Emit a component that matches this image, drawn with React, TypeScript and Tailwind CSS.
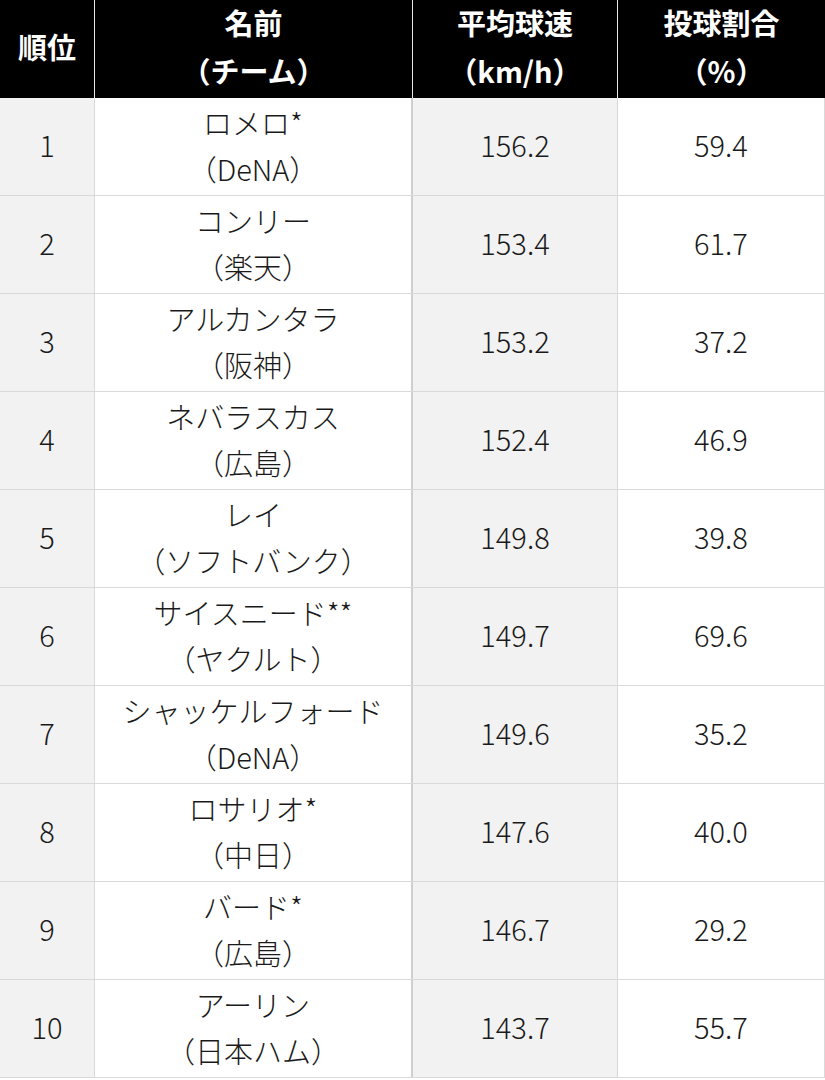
import React from "react";

const rows = [
  { rank: "1", name: "ロメロ*", team: "（DeNA）", speed: "156.2", pct: "59.4" },
  { rank: "2", name: "コンリー", team: "（楽天）", speed: "153.4", pct: "61.7" },
  { rank: "3", name: "アルカンタラ", team: "（阪神）", speed: "153.2", pct: "37.2" },
  { rank: "4", name: "ネバラスカス", team: "（広島）", speed: "152.4", pct: "46.9" },
  { rank: "5", name: "レイ", team: "（ソフトバンク）", speed: "149.8", pct: "39.8" },
  { rank: "6", name: "サイスニード**", team: "（ヤクルト）", speed: "149.7", pct: "69.6" },
  { rank: "7", name: "シャッケルフォード", team: "（DeNA）", speed: "149.6", pct: "35.2" },
  { rank: "8", name: "ロサリオ*", team: "（中日）", speed: "147.6", pct: "40.0" },
  { rank: "9", name: "バード*", team: "（広島）", speed: "146.7", pct: "29.2" },
  { rank: "10", name: "アーリン", team: "（日本ハム）", speed: "143.7", pct: "55.7" },
];

const font = { fontFamily: '"Noto Sans CJK JP", "Noto Sans", sans-serif' };

export default function App() {
  return (
    <div className="w-[825px] h-[1080px] bg-white text-[#1a1a1a] overflow-hidden" style={font}>
      <div className="flex h-[98px] bg-black text-white font-bold text-[29px] leading-[48px]">
        <div className="w-[95px] flex items-center justify-center pb-[6px] border-r border-[#e6e6e6]">順位</div>
        <div className="w-[318px] flex flex-col items-center justify-center pb-[6px] border-r border-[#e6e6e6]">
          <div>名前</div>
          <div>（チーム）</div>
        </div>
        <div className="w-[205px] flex flex-col items-center justify-center pb-[6px] border-r border-[#e6e6e6]">
          <div>平均球速</div>
          <div>（km/h）</div>
        </div>
        <div className="flex-1 flex flex-col items-center justify-center pb-[6px]">
          <div>投球割合</div>
          <div>（%）</div>
        </div>
      </div>
      {rows.map((r) => (
        <div key={r.rank} className="flex h-[98px] border-b border-[#d9d9d9] text-[29px] leading-[46px] font-light">
          <div className="w-[95px] bg-[#f2f2f2] flex items-center justify-center pb-[5px] border-r border-[#d9d9d9]">{r.rank}</div>
          <div className="w-[318px] flex flex-col items-center justify-center pb-[4px] border-r-2 border-[#cfcfcf]">
            <div>{r.name}</div>
            <div>{r.team}</div>
          </div>
          <div className="w-[205px] bg-[#f2f2f2] flex items-center justify-center pb-[5px] border-r border-[#d9d9d9]">{r.speed}</div>
          <div className="flex-1 flex items-center justify-center pb-[5px] border-r border-[#d9d9d9]">{r.pct}</div>
        </div>
      ))}
    </div>
  );
}
